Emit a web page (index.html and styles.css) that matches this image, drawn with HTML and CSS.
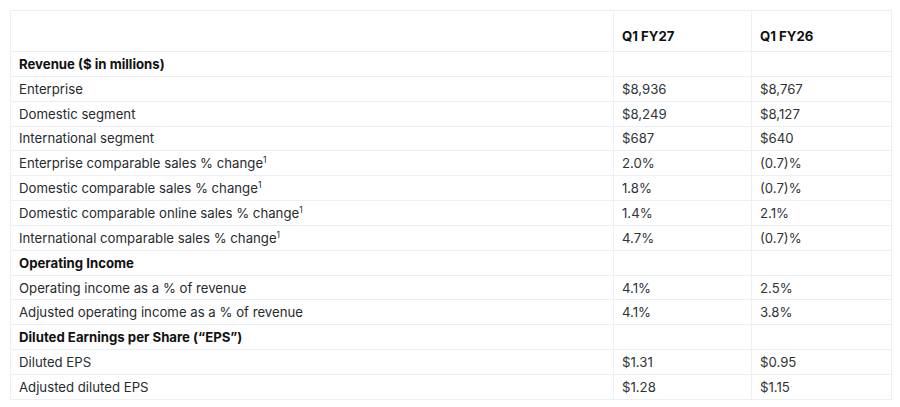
FILE: index.html
```html
<!DOCTYPE html>
<html lang="en">
<head>
<meta charset="utf-8">
<link rel="stylesheet" href="styles.css">
</head>
<body>
<div class="wrap">
<table class="fin">
  <colgroup><col class="c0"><col class="c1"><col class="c2"></colgroup>
  <thead>
    <tr class="head"><th></th><th>Q1 FY27</th><th>Q1 FY26</th></tr>
  </thead>
  <tbody>
    <tr class="sec"><td>Revenue ($ in millions)</td><td></td><td></td></tr>
    <tr><td>Enterprise</td><td>$8,936</td><td>$8,767</td></tr>
    <tr><td>Domestic segment</td><td>$8,249</td><td>$8,127</td></tr>
    <tr><td>International segment</td><td>$687</td><td>$640</td></tr>
    <tr><td>Enterprise comparable sales % change<sup>1</sup></td><td>2.0%</td><td>(0.7)%</td></tr>
    <tr><td>Domestic comparable sales % change<sup>1</sup></td><td>1.8%</td><td>(0.7)%</td></tr>
    <tr><td>Domestic comparable online sales % change<sup>1</sup></td><td>1.4%</td><td>2.1%</td></tr>
    <tr><td>International comparable sales % change<sup>1</sup></td><td>4.7%</td><td>(0.7)%</td></tr>
    <tr class="sec"><td>Operating Income</td><td></td><td></td></tr>
    <tr><td>Operating income as a % of revenue</td><td>4.1%</td><td>2.5%</td></tr>
    <tr><td>Adjusted operating income as a % of revenue</td><td>4.1%</td><td>3.8%</td></tr>
    <tr class="sec"><td>Diluted Earnings per Share (“EPS”)</td><td></td><td></td></tr>
    <tr><td>Diluted EPS</td><td>$1.31</td><td>$0.95</td></tr>
    <tr><td>Adjusted diluted EPS</td><td>$1.28</td><td>$1.15</td></tr>
  </tbody>
</table>
</div>
</body>
</html>
```
FILE: styles.css
```css
html, body {
  margin: 0;
  padding: 0;
  background: #ffffff;
}
body {
  font-family: Inter, "Liberation Sans", sans-serif;
  color: #262b2f;
}
.wrap {
  padding: 10px 9px 0 10px;
}
.fin {
  width: 881px;
  border-collapse: collapse;
  table-layout: fixed;
  font-size: 13.2px;
}
.c0 { width: 603px; }
.c1 { width: 138px; }
.c2 { width: 140px; }
.fin th, .fin td {
  border: 1px solid #eceff1;
  padding: 0 8px;
  text-align: left;
  white-space: nowrap;
}
.fin td {
  height: 24.85px;
  box-sizing: border-box;
  font-weight: 400;
  vertical-align: middle;
}
.head th {
  height: 41px;
  box-sizing: border-box;
  font-weight: 700;
  vertical-align: bottom;
  padding-bottom: 7px;
  color: #111;
}
.sec td {
  font-weight: 700;
  color: #111;
}
.fin td:nth-child(n+2) {
  color: #2e3337;
}
sup {
  font-size: 8.5px;
  line-height: 0;
  vertical-align: 5px;
}
```
